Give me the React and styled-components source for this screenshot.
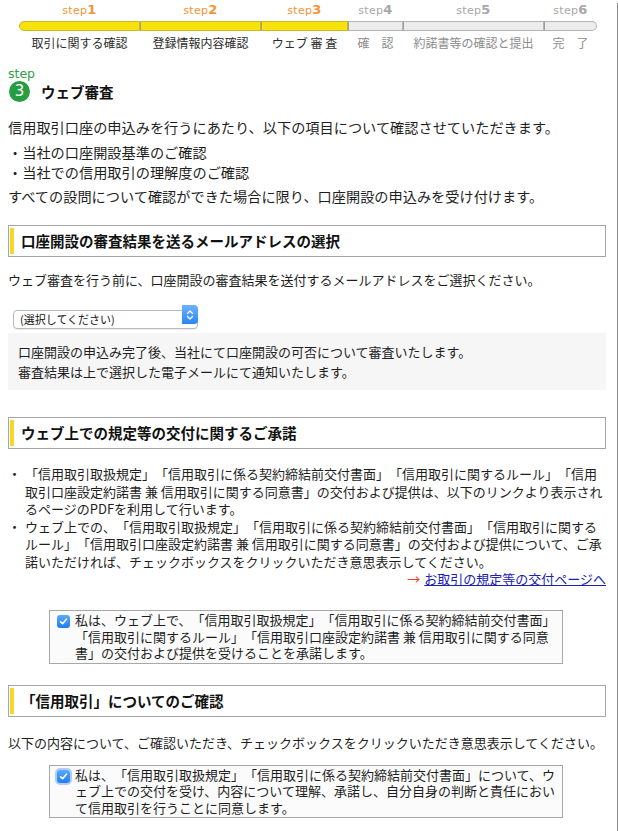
import React from 'react';
import styled, { createGlobalStyle } from 'styled-components';

const GlobalStyle = createGlobalStyle`
  html, body {
    margin: 0;
    padding: 0;
    background: #fff;
  }
  body {
    font-family: "Noto Sans CJK JP", "Noto Sans", sans-serif;
    color: #1e1e1e;
    text-spacing-trim: space-all;
  }
`;

const steps = [
  { num: 1, label: '取引に関する確認', width: 121, done: true },
  { num: 2, label: '登録情報内容確認', width: 121, done: true },
  { num: 3, label: 'ウェブ 審 査', width: 87, done: true },
  { num: 4, label: '確　認', width: 55, done: false },
  { num: 5, label: '約諾書等の確認と提出', width: 141, done: false },
  { num: 6, label: '完　了', width: 53, done: false },
];

const Page = styled.div`
  width: 618px;
  min-height: 831px;
  box-sizing: border-box;
  border-right: 1px solid #8a8a8a;
  padding: 0 11px 20px 8px;
`;

const Stepper = styled.div`
  display: flex;
  margin: 3px 0 0 11px;
`;

const StepCol = styled.div`
  width: ${p => p.$w}px;
  display: flex;
  flex-direction: column;
  align-items: center;
`;

const StepNum = styled.div`
  font-family: "DejaVu Sans", sans-serif;
  font-size: 11px;
  line-height: 14px;
  letter-spacing: 0.3px;
  color: ${p => (p.$done ? '#f39436' : '#a8a8a8')};
  b {
    font-size: 13px;
    font-weight: 700;
  }
`;

const BarSeg = styled.div`
  align-self: stretch;
  height: 10px;
  margin-top: 3px;
  box-sizing: border-box;
  background: ${p => (p.$done ? '#f7e20c' : '#ececec')};
  border: 1px solid ${p => (p.$done ? '#c9b827' : '#b4b4b4')};
  border-left: ${p => (p.$first ? `1px solid ${p.$done ? '#c9b827' : '#b4b4b4'}` : 'none')};
  border-radius: ${p => (p.$first ? '5px 0 0 5px' : p.$last ? '0 5px 5px 0' : '0')};
  box-shadow: ${p => (p.$first ? 'none' : 'inset 1px 0 0 #9d9d9d')};
`;

const StepLabel = styled.div`
  font-size: 12px;
  line-height: 16px;
  margin-top: 4px;
  white-space: nowrap;
  color: ${p => (p.$done ? '#2c2c2c' : '#8c8c8c')};
`;

const StepMark = styled.div`
  margin-top: 16px;
  font-family: "DejaVu Sans", sans-serif;
  font-size: 12.5px;
  line-height: 14px;
  color: #2f9e45;
`;

const TitleRow = styled.div`
  display: flex;
  align-items: center;
  gap: 11px;
  margin-left: 1px;
`;

const Circle = styled.span`
  width: 21px;
  height: 21px;
  border-radius: 50%;
  background: #279d42;
  color: #fff;
  display: grid;
  place-items: center;
  font-family: "DejaVu Sans", sans-serif;
  font-size: 15px;
  line-height: 1;
`;

const PageTitle = styled.h1`
  margin: 0;
  font-size: 14.5px;
  font-weight: 700;
  line-height: 21px;
  color: #111;
`;

const Intro = styled.div`
  margin-top: 15px;
  font-size: 14.2px;
  line-height: 20px;
  p {
    margin: 0;
  }
`;

const IntroList = styled.div`
  margin: 5px 0 4px;
`;

const SectionHead = styled.h2`
  margin: ${p => p.$top}px 0 0;
  height: 32px;
  box-sizing: border-box;
  border: 1px solid #a6a6a6;
  padding: 2px 0 2px 1px;
  display: flex;
  align-items: stretch;
  gap: 7px;
  font-size: 14.5px;
  font-weight: 700;
  color: #111;
  &::before {
    content: '';
    width: 4px;
    background: #f5d726;
  }
  span {
    align-self: center;
    line-height: 20px;
  }
`;

const Note = styled.p`
  margin: ${p => p.$top}px 0 0;
  font-size: 13px;
  line-height: 18px;
  white-space: nowrap;
`;

const SelectWrap = styled.div`
  position: relative;
  width: 185px;
  height: 19px;
  margin: 16px 0 0 5px;
`;

const Select = styled.select`
  appearance: none;
  width: 100%;
  height: 100%;
  box-sizing: border-box;
  border: 1px solid #b9b9b9;
  border-radius: 4px;
  background: #fff;
  box-shadow: 0 1px 1px rgba(0, 0, 0, 0.08);
  font-family: inherit;
  font-size: 11px;
  color: #111;
  padding: 0 0 0 6px;
  line-height: 17px;
`;

const SelectArrow = styled.span`
  position: absolute;
  right: 0;
  top: 0;
  width: 16px;
  height: 19px;
  border-radius: 0 4px 4px 0;
  background: linear-gradient(#6db3fb, #2a86f3);
  display: grid;
  place-items: center;
  pointer-events: none;
`;

const InfoBox = styled.div`
  margin-top: 9px;
  background: #f6f6f6;
  padding: 9px 10px 8px;
  font-size: 13px;
  line-height: 20px;
  p {
    margin: 0;
  }
`;

const BulletList = styled.ul`
  list-style: none;
  margin: 16px 0 0;
  padding: 0;
  font-size: 13px;
  line-height: 17.5px;
`;

const Bullet = styled.li`
  display: grid;
  grid-template-columns: 17px 1fr;
  &::before {
    content: '・';
    text-align: left;
  }
`;

const LinkRow = styled.div`
  text-align: right;
  font-size: 13px;
  line-height: 18px;
  span {
    color: #ee3b2f;
    margin-right: 4px;
  }
  a {
    color: #1a22b5;
    text-decoration: underline;
  }
`;

const AgreeBox = styled.label`
  display: grid;
  grid-template-columns: 13px 1fr;
  column-gap: 5px;
  width: 514px;
  box-sizing: border-box;
  margin: ${p => p.$top}px 0 0 41px;
  padding: 1px 3px 1px 7px;
  border: 1px solid #a8a8a8;
  background: #fbfbfb;
  font-size: 13px;
  line-height: 16.5px;
  line-break: anywhere;
`;

const Check = styled.span`
  width: 13px;
  height: 13px;
  margin-top: 3px;
  border-radius: 3px;
  background: linear-gradient(#5aa9fb, #1f7cf0);
  box-shadow: ${p => (p.$focus ? '0 0 0 2px rgba(80,150,245,0.45)' : 'none')};
  display: grid;
  place-items: center;
`;

const CheckMark = () => (
  <svg width="9" height="9" viewBox="0 0 9 9">
    <path d="M1.6 4.8 L3.6 6.7 L7.4 2.2" fill="none" stroke="#fff" strokeWidth="1.6" strokeLinecap="round" strokeLinejoin="round" />
  </svg>
);

const Arrows = () => (
  <svg width="8" height="12" viewBox="0 0 8 12">
    <path d="M1.5 4.5 L4 2 L6.5 4.5 M1.5 7.5 L4 10 L6.5 7.5" fill="none" stroke="#fff" strokeWidth="1.3" strokeLinecap="round" strokeLinejoin="round" />
  </svg>
);

export default function App() {
  return (
    <>
      <GlobalStyle />
      <Page>
        <Stepper>
          {steps.map((s, i) => (
            <StepCol key={s.num} $w={s.width}>
              <StepNum $done={s.done}>step<b>{s.num}</b></StepNum>
              <BarSeg $done={s.done} $first={i === 0} $last={i === steps.length - 1} />
              <StepLabel $done={s.done}>{s.label}</StepLabel>
            </StepCol>
          ))}
        </Stepper>

        <StepMark>step</StepMark>
        <TitleRow>
          <Circle>3</Circle>
          <PageTitle>ウェブ審査</PageTitle>
        </TitleRow>

        <Intro>
          <p>信用取引口座の申込みを行うにあたり、以下の項目について確認させていただきます。</p>
          <IntroList>
            <div>・当社の口座開設基準のご確認</div>
            <div>・当社での信用取引の理解度のご確認</div>
          </IntroList>
          <p>すべての設問について確認ができた場合に限り、口座開設の申込みを受け付けます。</p>
        </Intro>

        <SectionHead $top={19}><span>口座開設の審査結果を送るメールアドレスの選択</span></SectionHead>
        <Note $top={14}>ウェブ審査を行う前に、口座開設の審査結果を送付するメールアドレスをご選択ください。</Note>
        <SelectWrap>
          <Select defaultValue="">
            <option value="">(選択してください)</option>
          </Select>
          <SelectArrow><Arrows /></SelectArrow>
        </SelectWrap>
        <InfoBox>
          <p>口座開設の申込み完了後、当社にて口座開設の可否について審査いたします。</p>
          <p>審査結果は上で選択した電子メールにて通知いたします。</p>
        </InfoBox>

        <SectionHead $top={27}><span>ウェブ上での規定等の交付に関するご承諾</span></SectionHead>
        <BulletList>
          <Bullet>
            <span>「信用取引取扱規定」「信用取引に係る契約締結前交付書面」「信用取引に関するルール」「信用取引口座設定約諾書 兼 信用取引に関する同意書」の交付および提供は、以下のリンクより表示されるページのPDFを利用して行います。</span>
          </Bullet>
          <Bullet>
            <span>ウェブ上での、「信用取引取扱規定」「信用取引に係る契約締結前交付書面」「信用取引に関するルール」「信用取引口座設定約諾書 兼 信用取引に関する同意書」の交付および提供について、ご承諾いただければ、チェックボックスをクリックいただき意思表示してください。</span>
          </Bullet>
        </BulletList>
        <LinkRow>
          <span>→</span>
          <a href="#">お取引の規定等の交付ページへ</a>
        </LinkRow>
        <AgreeBox $top={22}>
          <Check><CheckMark /></Check>
          <span>私は、ウェブ上で、「信用取引取扱規定」「信用取引に係る契約締結前交付書面」「信用取引に関するルール」「信用取引口座設定約諾書 兼 信用取引に関する同意書」の交付および提供を受けることを承諾します。</span>
        </AgreeBox>

        <SectionHead $top={21}><span>「信用取引」についてのご確認</span></SectionHead>
        <Note $top={17}>以下の内容について、ご確認いただき、チェックボックスをクリックいただき意思表示してください。</Note>
        <AgreeBox $top={13}>
          <Check $focus><CheckMark /></Check>
          <span>私は、「信用取引取扱規定」「信用取引に係る契約締結前交付書面」について、ウェブ上での交付を受け、内容について理解、承諾し、自分自身の判断と責任において信用取引を行うことに同意します。</span>
        </AgreeBox>
      </Page>
    </>
  );
}
